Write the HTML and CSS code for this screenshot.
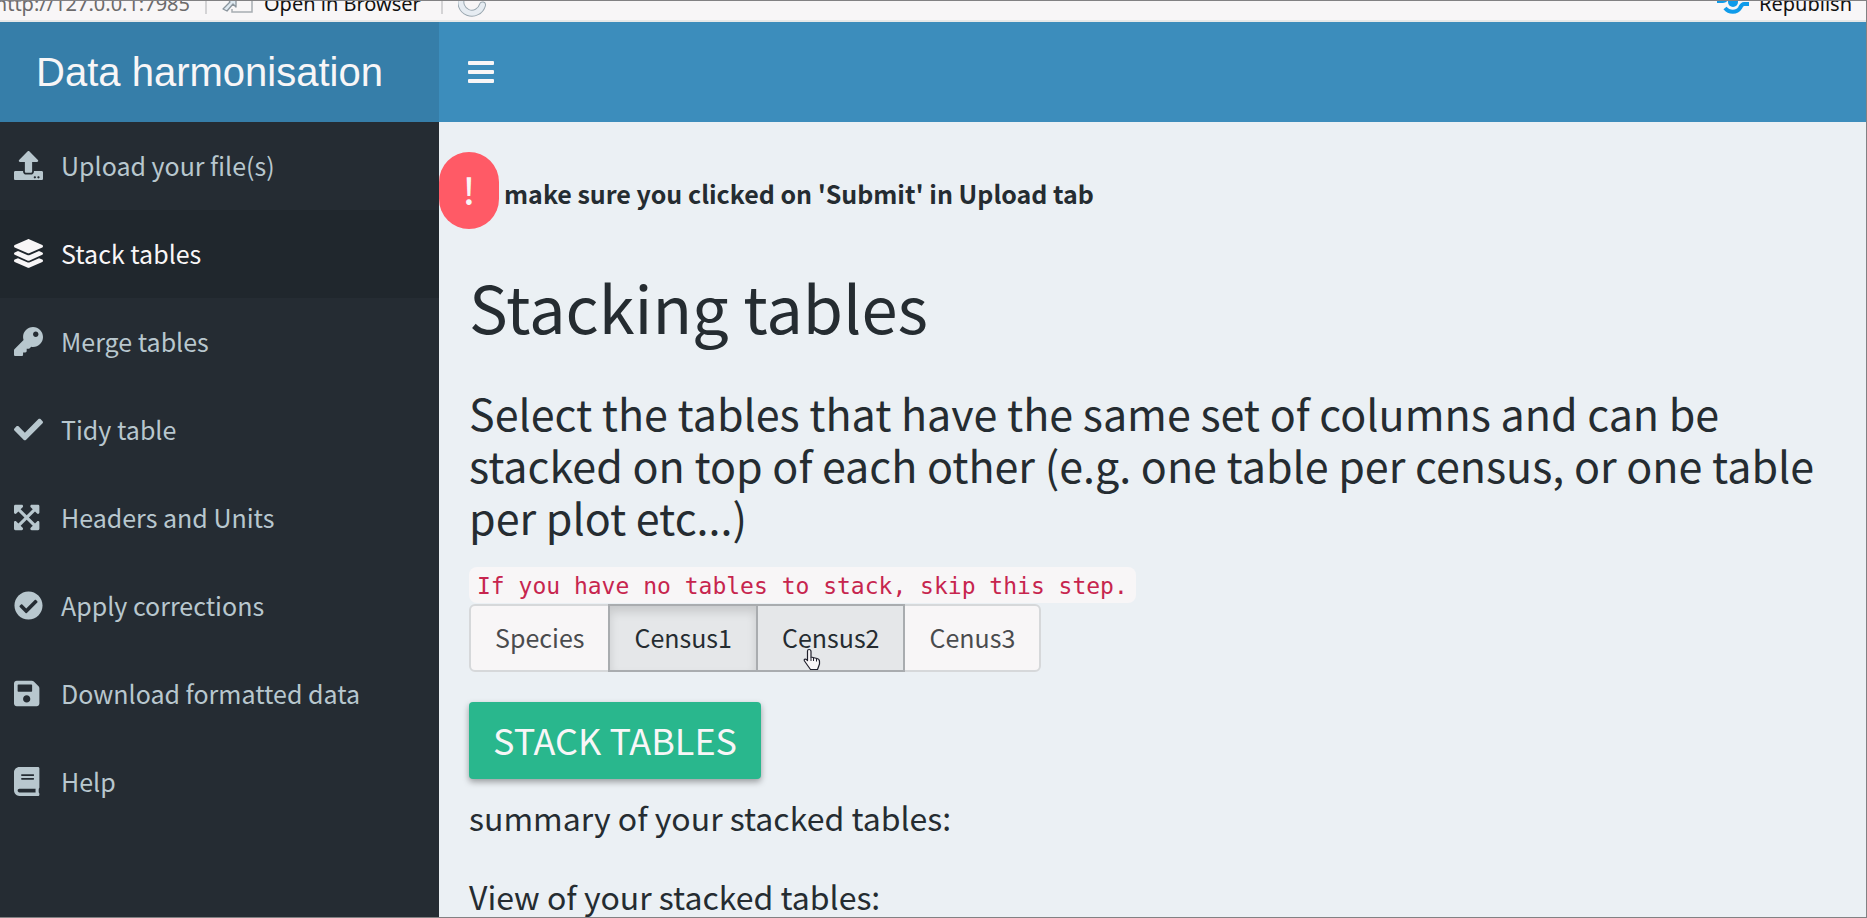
FILE: index.html
```html
<!DOCTYPE html>
<html lang="en">
<head>
<meta charset="utf-8">
<title>Data harmonisation</title>
<link rel="stylesheet" href="styles.css">
</head>
<body>
<div class="viewer">
  <div class="toolbar">
    <span class="toolbar-url"><span>http://127.0.0.1:7985</span></span>
    <span class="toolbar-sep"></span>
    <button class="toolbar-button" type="button">
      <svg class="popout-icon" width="32" height="24" viewBox="0 0 32 24" aria-hidden="true"><path d="M16 0h14v20H10v-3" fill="#f8f6f7" stroke="#a7adb2" stroke-width="1.5"/><path d="M6 7h8v8l-3-3-6 7-4-2 7-7z" fill="#dfe9f1" stroke="#8b959d" stroke-width="1.3" stroke-linejoin="round"/></svg>
      Open in Browser
    </button>
    <span class="toolbar-sep"></span>
    <button class="toolbar-button" type="button" aria-label="Reload">
      <svg class="reload-icon" width="28" height="28" viewBox="0 0 28 28" aria-hidden="true"><path d="M24.500 15A11 11 0 1 1 20 3" fill="none" stroke="#9aa7b0" stroke-width="7" stroke-linecap="round"/><path d="M24.500 15A11 11 0 1 1 20 3" fill="none" stroke="#e6ecf2" stroke-width="5" stroke-linecap="round"/></svg>
    </button>
    <button class="toolbar-button toolbar-publish" type="button">
      <svg class="publish-icon" width="32" height="28" viewBox="0 0 32 28" aria-hidden="true"><g fill="none" stroke="#0f9bea" stroke-width="4"><path d="M0 11h6c4 0 5-6 12-6"/><path d="M8 18c4 5 12 5 15 0 1-2 2-4 4-4h5"/></g><circle cx="16" cy="12" r="5" fill="#0f9bea"/></svg>
      Republish
    </button>
  </div>

  <header class="header">
    <a class="logo" href="#">Data harmonisation</a>
    <button class="menu-toggle" type="button" aria-label="Toggle navigation">
      <svg width="26" height="24" viewBox="0 0 26 24" aria-hidden="true"><g fill="currentColor"><rect y="1" width="26" height="4" rx="1"/><rect y="10" width="26" height="4" rx="1"/><rect y="19" width="26" height="4" rx="1"/></g></svg>
    </button>
  </header>

  <div class="body">
    <nav class="sidebar">
      <a class="nav-item" href="#"><svg class="nav-icon" viewBox="0 0 512 512" aria-hidden="true"><path d="M296 384h-80c-13.300 0-24-10.700-24-24V192h-87.700c-17.800 0-26.700-21.500-14.100-34.100L242.300 5.700c7.500-7.500 19.800-7.500 27.300 0l152.200 152.200c12.600 12.600 3.700 34.100-14.100 34.100H320v168c0 13.300-10.700 24-24 24zm216-8v112c0 13.300-10.700 24-24 24H24c-13.300 0-24-10.700-24-24V376c0-13.300 10.700-24 24-24h136v8c0 30.900 25.100 56 56 56h80c30.900 0 56-25.100 56-56v-8h136c13.300 0 24 10.700 24 24zm-124 88c0-11-9-20-20-20s-20 9-20 20 9 20 20 20 20-9 20-20zm64 0c0-11-9-20-20-20s-20 9-20 20 9 20 20 20 20-9 20-20z"/></svg>Upload your file(s)</a>
      <a class="nav-item active" href="#" aria-current="page"><svg class="nav-icon" viewBox="0 0 512 512" aria-hidden="true"><path d="M12.410 148.020l232.940 105.670c6.800 3.090 14.490 3.090 21.290 0l232.940-105.670c16.550-7.510 16.550-32.520 0-40.030L266.650 2.310a25.607 25.607 0 0 0-21.290 0L12.410 107.980c-16.550 7.510-16.550 32.530 0 40.040zm487.180 88.280l-58.090-26.330-161.640 73.270c-7.560 3.430-15.590 5.170-23.860 5.170s-16.290-1.740-23.860-5.170L70.510 209.970l-58.100 26.330c-16.550 7.500-16.550 32.500 0 40l232.940 105.590c6.800 3.080 14.490 3.080 21.290 0L499.590 276.300c16.550-7.500 16.550-32.500 0-40zm0 127.800l-57.870-26.230-161.860 73.370c-7.560 3.430-15.590 5.170-23.860 5.170s-16.290-1.740-23.860-5.170L70.290 337.870 12.410 364.100c-16.550 7.500-16.550 32.500 0 40l232.940 105.590c6.800 3.080 14.490 3.080 21.290 0L499.590 404.100c16.550-7.500 16.550-32.500 0-40z"/></svg>Stack tables</a>
      <a class="nav-item" href="#"><svg class="nav-icon" viewBox="0 0 512 512" aria-hidden="true"><path d="M512 176.001C512 273.203 433.202 352 336 352c-11.220 0-22.190-1.062-32.827-3.069l-24.012 27.014A23.999 23.999 0 0 1 261.223 384H224v40c0 13.255-10.745 24-24 24h-40v40c0 13.255-10.745 24-24 24H24c-13.255 0-24-10.745-24-24v-78.059c0-6.365 2.529-12.470 7.029-16.971l161.802-161.802C163.108 213.814 160 195.271 160 176 160 78.798 238.797.001 335.999 0 433.488-.001 512 78.511 512 176.001zM336 128c0 26.510 21.490 48 48 48s48-21.490 48-48-21.490-48-48-48-48 21.490-48 48z"/></svg>Merge tables</a>
      <a class="nav-item" href="#"><svg class="nav-icon" viewBox="0 0 512 512" aria-hidden="true"><path d="M173.898 439.404l-166.400-166.400c-9.997-9.997-9.997-26.206 0-36.204l36.203-36.204c9.997-9.998 26.207-9.998 36.204 0L192 312.690 432.095 72.596c9.997-9.997 26.207-9.997 36.204 0l36.203 36.204c9.997 9.997 9.997 26.206 0 36.204l-294.400 294.401c-9.998 9.997-26.207 9.997-36.204-.001z"/></svg>Tidy table</a>
      <a class="nav-item" href="#"><svg class="nav-icon" viewBox="0 0 512 512" aria-hidden="true"><path d="M448 344v112a23.940 23.940 0 0 1-24 24H312c-21.390 0-32.090-25.900-17-41l36.200-36.200L224 295.600 116.770 402.900 153 439c15.090 15.100 4.390 41-17 41H24a23.940 23.940 0 0 1-24-24V344c0-21.400 25.890-32.100 41-17l36.190 36.200L184.460 256 77.180 148.700 41 185c-15.100 15.100-41 4.400-41-17V56a23.940 23.940 0 0 1 24-24h112c21.390 0 32.090 25.900 17 41l-36.200 36.200L224 216.400l107.230-107.300L295 73c-15.090-15.100-4.390-41 17-41h112a23.940 23.940 0 0 1 24 24v112c0 21.400-25.890 32.100-41 17l-36.190-36.200L263.540 256l107.280 107.300L407 327.100c15.100-15.200 41-4.500 41 16.900z"/></svg>Headers and Units</a>
      <a class="nav-item" href="#"><svg class="nav-icon" viewBox="0 0 512 512" aria-hidden="true"><path fill-rule="evenodd" d="M504 256c0 136.967-111.033 248-248 248S8 392.967 8 256 119.033 8 256 8s248 111.033 248 248zM227.314 387.314l184-184c6.248-6.248 6.248-16.379 0-22.627l-22.627-22.627c-6.248-6.249-16.379-6.249-22.628 0L216 308.118l-70.059-70.059c-6.248-6.248-16.379-6.248-22.628 0l-22.627 22.627c-6.248 6.248-6.248 16.379 0 22.627l104 104c6.249 6.249 16.379 6.249 22.628.001z"/></svg>Apply corrections</a>
      <a class="nav-item" href="#"><svg class="nav-icon" viewBox="0 0 512 512" aria-hidden="true"><path d="M433.941 129.941l-83.882-83.882A48 48 0 0 0 316.118 32H48C21.490 32 0 53.490 0 80v352c0 26.510 21.490 48 48 48h352c26.510 0 48-21.490 48-48V163.882a48 48 0 0 0-14.059-33.941zM224 416c-35.346 0-64-28.654-64-64 0-35.346 28.654-64 64-64s64 28.654 64 64c0 35.346-28.654 64-64 64zm96-304.520V212c0 6.627-5.373 12-12 12H76c-6.627 0-12-5.373-12-12V108c0-6.627 5.373-12 12-12h228.520c3.183 0 6.235 1.264 8.485 3.515l3.480 3.480A11.996 11.996 0 0 1 320 111.480z"/></svg>Download formatted data</a>
      <a class="nav-item" href="#"><svg class="nav-icon" viewBox="0 0 512 512" aria-hidden="true"><path d="M448 360V24c0-13.300-10.700-24-24-24H96C43 0 0 43 0 96v320c0 53 43 96 96 96h328c13.300 0 24-10.700 24-24v-16c0-7.500-3.500-14.300-8.900-18.700-4.200-15.400-4.200-59.300 0-74.700 5.400-4.300 8.900-11.100 8.900-18.600zM128 134c0-3.300 2.700-6 6-6h212c3.300 0 6 2.700 6 6v20c0 3.300-2.700 6-6 6H134c-3.300 0-6-2.700-6-6v-20zm0 64c0-3.300 2.700-6 6-6h212c3.300 0 6 2.700 6 6v20c0 3.300-2.700 6-6 6H134c-3.300 0-6-2.700-6-6v-20zm253.400 250H96c-17.700 0-32-14.300-32-32 0-17.600 14.400-32 32-32h285.400c-1.900 17.100-1.900 46.900 0 64z"/></svg>Help</a>
    </nav>

    <main class="main">
      <div class="notice">
        <span class="notice-badge">!</span>
        <strong class="notice-text">make sure you clicked on 'Submit' in Upload tab</strong>
      </div>
      <section class="content">
        <h1 class="title">Stacking tables</h1>
        <h3 class="lead">Select the tables that have the same set of columns and can be stacked on top of each other (e.g. one table per census, or one table per plot etc...)</h3>
        <code class="hint">If you have no tables to stack, skip this step.</code>
        <div class="choices" role="group" aria-label="Tables to stack">
          <button class="choice" type="button">Species</button>
          <button class="choice selected" type="button" aria-pressed="true">Census1</button>
          <button class="choice hovered" type="button">Census2
            <svg class="pointer" width="18" height="22" viewBox="0 0 18 22" aria-hidden="true"><path d="M6 1.500c1.200 0 2 .8 2 2V9l6 1.500c2 .5 2.500 1.500 2.500 3V16l-2 5.500h-7L5 18l-3.500-5c-.8-1.500.5-2.500 2-1.500l1 1V3c0-1 .5-1.500 1.500-1.500z" fill="#f8f6f7" stroke="#20202c" stroke-width="1.200" stroke-linejoin="round"/><path d="M10.500 10v3M13.500 11v2.500M8 9v4" stroke="#20202c"/></svg>
          </button>
          <button class="choice" type="button">Cenus3</button>
        </div>
        <button class="stack-button" type="button">STACK TABLES</button>
        <h4 class="subhead">summary of your stacked tables:</h4>
        <h4 class="subhead">View of your stacked tables:</h4>
      </section>
    </main>
  </div>
</div>
</body>
</html>
```
FILE: styles.css
```css
* { box-sizing: border-box; }

body {
  margin: 0;
  font-family: "Noto Sans CJK SC", "Open Sans", sans-serif;
  font-size: 25px;
  color: #252c31;
  background: #ebf0f4;
}

button {
  margin: 0;
  padding: 0;
  border: 0;
  background: none;
  font: inherit;
  color: inherit;
  cursor: pointer;
}

svg { display: block; flex: none; }

.viewer {
  display: flex;
  flex-direction: column;
  height: 100vh;
  overflow: hidden;
  border: solid #828183;
  border-width: 1px 1px 1px 0;
}

/* Viewer toolbar, scrolled partly out of view */
.toolbar {
  display: flex;
  flex: none;
  align-items: flex-end;
  height: 21px;
  padding-bottom: 2px;
  overflow: hidden;
  border-bottom: 2px solid #e6e8e8;
  background: #f8f6f7;
  color: #111;
  font: 20px/28px "Noto Sans", "Open Sans", sans-serif;
}

.toolbar-url {
  display: flex;
  justify-content: flex-end;
  width: 190px;
  color: #6c6a6b;
}

.toolbar-sep {
  width: 2px;
  height: 14px;
  margin: 0 15px 4px;
  background: #d4d3d5;
}

.toolbar-button {
  display: flex;
  align-items: center;
  gap: 10px;
}

.toolbar-sep + .toolbar-button + .toolbar-sep { margin-left: 20px; }

.toolbar-publish { margin-left: auto; margin-right: 14px; }

/* Header */
.header {
  display: flex;
  flex: none;
  height: 100px;
  background: #3c8dbc;
  color: #f8f6f7;
}

.logo {
  display: flex;
  align-items: center;
  justify-content: center;
  width: 439px;
  padding-right: 20px;
  background: #367ea9;
  color: inherit;
  font: 40px/100px "Liberation Sans", Arial, sans-serif;
  text-decoration: none;
}

.menu-toggle { padding: 0 29px; }

/* Sidebar */
.body {
  display: flex;
  flex: 1;
  min-height: 0;
}

.sidebar {
  flex: none;
  width: 439px;
  background: #252c33;
}

.nav-item {
  display: flex;
  align-items: center;
  gap: 18px;
  height: 88px;
  padding: 0 0 2px 14px;
  color: #b8c7ce;
  text-decoration: none;
}

.nav-item.active { background: #20272d; color: #f8f6f7; }

.nav-icon {
  width: 29px;
  height: 29px;
  fill: currentColor;
}

/* Main column */
.main {
  flex: 1;
  min-width: 0;
}

.notice {
  display: flex;
  align-items: center;
  gap: 5px;
  padding-top: 30px;
}

.notice-badge {
  width: 60px;
  padding-bottom: 2px;
  border-radius: 30px;
  background: #ff5a66;
  color: #f8f6f7;
  font-size: 36px;
  font-weight: 500;
  line-height: 75px;
  text-align: center;
}

.notice-text { padding-top: 4px; }

.content { padding: 41px 30px 0; }

.title {
  margin: 0 0 44px;
  font-size: 65px;
  font-weight: 400;
  line-height: 72px;
}

.lead {
  margin: 0 0 25px;
  font-size: 43px;
  font-weight: 400;
  line-height: 52px;
}

.hint {
  display: block;
  width: fit-content;
  padding: 2px 8px 0;
  border-radius: 8px;
  background: #f8f6f7;
  color: #c7254e;
  font: 23px/34px "DejaVu Sans Mono", monospace;
}

.choices {
  display: flex;
  margin-top: 1px;
}

.choice {
  position: relative;
  margin-left: -2px;
  padding: 13px 24px 15px;
  border: 2px solid #d6d8da;
  background: #f8f6f7;
  color: #4a4b4e;
  line-height: 36px;
}

.choice:first-child { margin-left: 0; border-radius: 6px 0 0 6px; }
.choice:last-child { border-radius: 0 6px 6px 0; }

.choice.selected,
.choice.hovered {
  z-index: 1;
  border-color: #a9acaf;
  background: #e5e7e9;
  color: #252c31;
}

.choice.selected { box-shadow: inset 0 6px 10px rgba(0, 0, 0, 0.125); }

.pointer {
  position: absolute;
  left: 45px;
  bottom: 0;
}

.stack-button {
  display: block;
  margin: 30px 0 18px;
  padding: 0 24px 3px;
  border-radius: 4px;
  background: #29b78d;
  box-shadow: 0 3px 6px rgba(0, 0, 0, 0.35);
  color: #f8f6f7;
  font-size: 36px;
  line-height: 74px;
}

.subhead {
  margin: 0 0 39px;
  font-size: 32px;
  font-weight: 400;
  line-height: 40px;
}
```
